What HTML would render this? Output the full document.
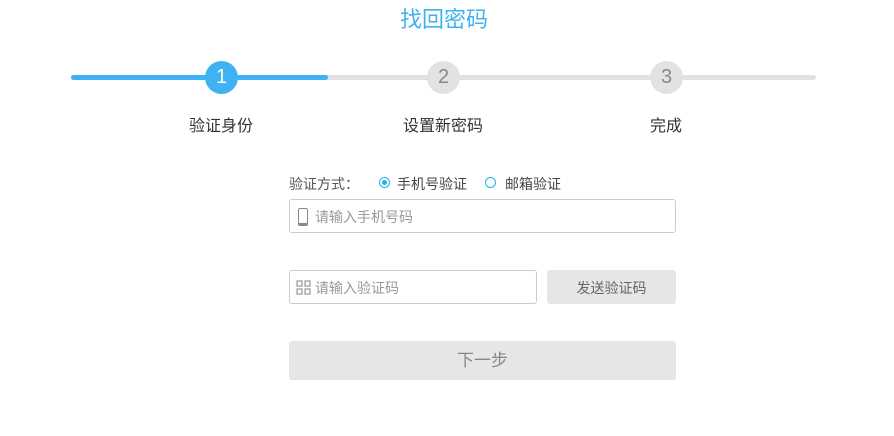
<!DOCTYPE html>
<html><head><meta charset="utf-8"><style>
body{margin:0;width:894px;height:436px;background:#fff;font-family:"Liberation Sans","Noto Sans CJK SC",sans-serif;position:relative;overflow:hidden}
.a{position:absolute}
.t{left:0;width:888px;text-align:center;top:2px;font-size:22px;color:#3eb2f2}
.line{top:75px;height:5px;border-radius:3px}
.c{width:33px;height:33px;border-radius:50%;top:61px;text-align:center;line-height:33px;font-size:20px}
.l{top:112px;font-size:16px;color:#333;width:120px;text-align:center}
.inp{border:1px solid #ccc;border-radius:3px;box-sizing:border-box;font-size:14px;color:#999}
</style></head><body>
<div class="a t">找回密码</div>
<div class="a line" style="left:71px;width:745px;background:#e2e2e2"></div>
<div class="a line" style="left:71px;width:257px;background:#3eb2f2"></div>
<div class="a c" style="left:205px;background:#3eb2f2;color:#fff">1</div>
<div class="a c" style="left:427px;background:#e2e2e2;color:#888">2</div>
<div class="a c" style="left:650px;background:#e2e2e2;color:#888">3</div>
<div class="a l" style="left:161px">验证身份</div>
<div class="a l" style="left:383px">设置新密码</div>
<div class="a l" style="left:606px">完成</div>
<div class="a" style="left:289px;top:174px;font-size:14px;color:#555">验证方式：</div>
<div class="a" style="left:379px;top:177px;width:9px;height:9px;border:1px solid #1ab4ee;border-radius:50%"></div>
<div class="a" style="left:382px;top:180px;width:5px;height:5px;background:#1ab4ee;border-radius:50%"></div>
<div class="a" style="left:397px;top:174px;font-size:14px;color:#444">手机号验证</div>
<div class="a" style="left:485px;top:177px;width:9px;height:9px;border:1px solid #1ab4ee;border-radius:50%"></div>
<div class="a" style="left:505px;top:174px;font-size:14px;color:#444">邮箱验证</div>
<div class="a inp" style="left:289px;top:199px;width:387px;height:34px"></div>
<div class="a" style="left:298px;top:208px;width:8px;height:14px;border:1.5px solid #888;border-radius:2px;border-bottom-width:3px"></div>
<div class="a" style="left:315px;top:207px;font-size:14px;color:#999">请输入手机号码</div>
<div class="a inp" style="left:289px;top:270px;width:248px;height:34px"></div>
<svg class="a" style="left:296px;top:280px" width="16" height="16" viewBox="0 0 16 16" fill="none" stroke="#999" stroke-width="1.2"><rect x="1" y="1" width="5" height="5"/><rect x="9" y="1" width="5" height="5"/><rect x="1" y="9" width="5" height="5"/><rect x="9" y="9" width="5" height="5"/></svg>
<div class="a" style="left:315px;top:278px;font-size:14px;color:#999">请输入验证码</div>
<div class="a" style="left:547px;top:270px;width:129px;height:34px;background:#e6e6e6;border-radius:3px;text-align:center;line-height:36px;font-size:14px;color:#666">发送验证码</div>
<div class="a" style="left:289px;top:341px;width:387px;height:39px;background:#e6e6e6;border-radius:3px;text-align:center;line-height:39px;font-size:17px;color:#888">下一步</div>
</body></html>
